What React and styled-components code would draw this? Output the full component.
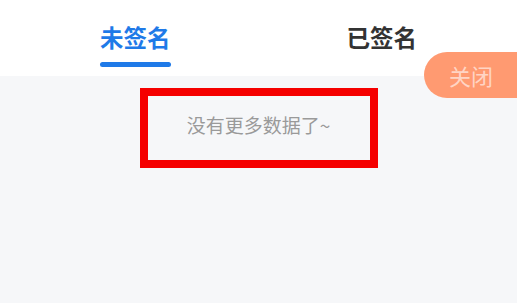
import React, { useState } from 'react';
import styled, { createGlobalStyle } from 'styled-components';

const GlobalStyle = createGlobalStyle`
  html, body {
    margin: 0;
    padding: 0;
    background: #f6f7f9;
    font-family: "Noto Sans CJK SC", "Noto Sans", sans-serif;
  }
`;

const Page = styled.div`
  position: relative;
  width: 517px;
  height: 303px;
  background: #f6f7f9;
  overflow: hidden;
`;

const TabBar = styled.div`
  display: flex;
  justify-content: center;
  gap: 176px;
  height: 76px;
  background: #fff;
`;

const Tab = styled.div`
  position: relative;
  display: flex;
  align-items: flex-start;
  padding-top: 21px;
  font-size: 23.5px;
  font-weight: 700;
  line-height: 32px;
  color: ${(p) => (p.active ? '#1f7ae8' : '#333')};
  cursor: pointer;

  &::after {
    content: '';
    display: ${(p) => (p.active ? 'block' : 'none')};
    position: absolute;
    left: 0;
    right: 0;
    top: 62px;
    height: 5px;
    border-radius: 3px;
    background: #1f7ae8;
  }
`;

const Content = styled.div`
  display: flex;
  justify-content: center;
  padding-top: 12px;
`;

const EmptyBox = styled.div`
  box-sizing: border-box;
  width: 238px;
  height: 80px;
  padding-bottom: 8px;
  border: 8px solid #f50000;
  display: flex;
  align-items: center;
  justify-content: center;
  font-size: 19px;
  color: #9a9a9a;
`;

const CloseButton = styled.button`
  position: absolute;
  top: 52px;
  right: -30px;
  height: 46px;
  width: 123px;
  padding: 0 0 0 25px;
  border: none;
  border-radius: 23px;
  background: #ff9a71;
  color: rgba(255, 255, 255, 0.6);
  font-family: inherit;
  font-size: 22px;
  text-align: left;
  cursor: pointer;
`;

export default function App() {
  const [tab, setTab] = useState(0);
  const tabs = ['未签名', '已签名'];

  return (
    <Page>
      <GlobalStyle />
      <TabBar>
        {tabs.map((t, i) => (
          <Tab key={t} active={tab === i} onClick={() => setTab(i)}>
            {t}
          </Tab>
        ))}
      </TabBar>
      <Content>
        <EmptyBox>没有更多数据了~</EmptyBox>
      </Content>
      <CloseButton>关闭</CloseButton>
    </Page>
  );
}
